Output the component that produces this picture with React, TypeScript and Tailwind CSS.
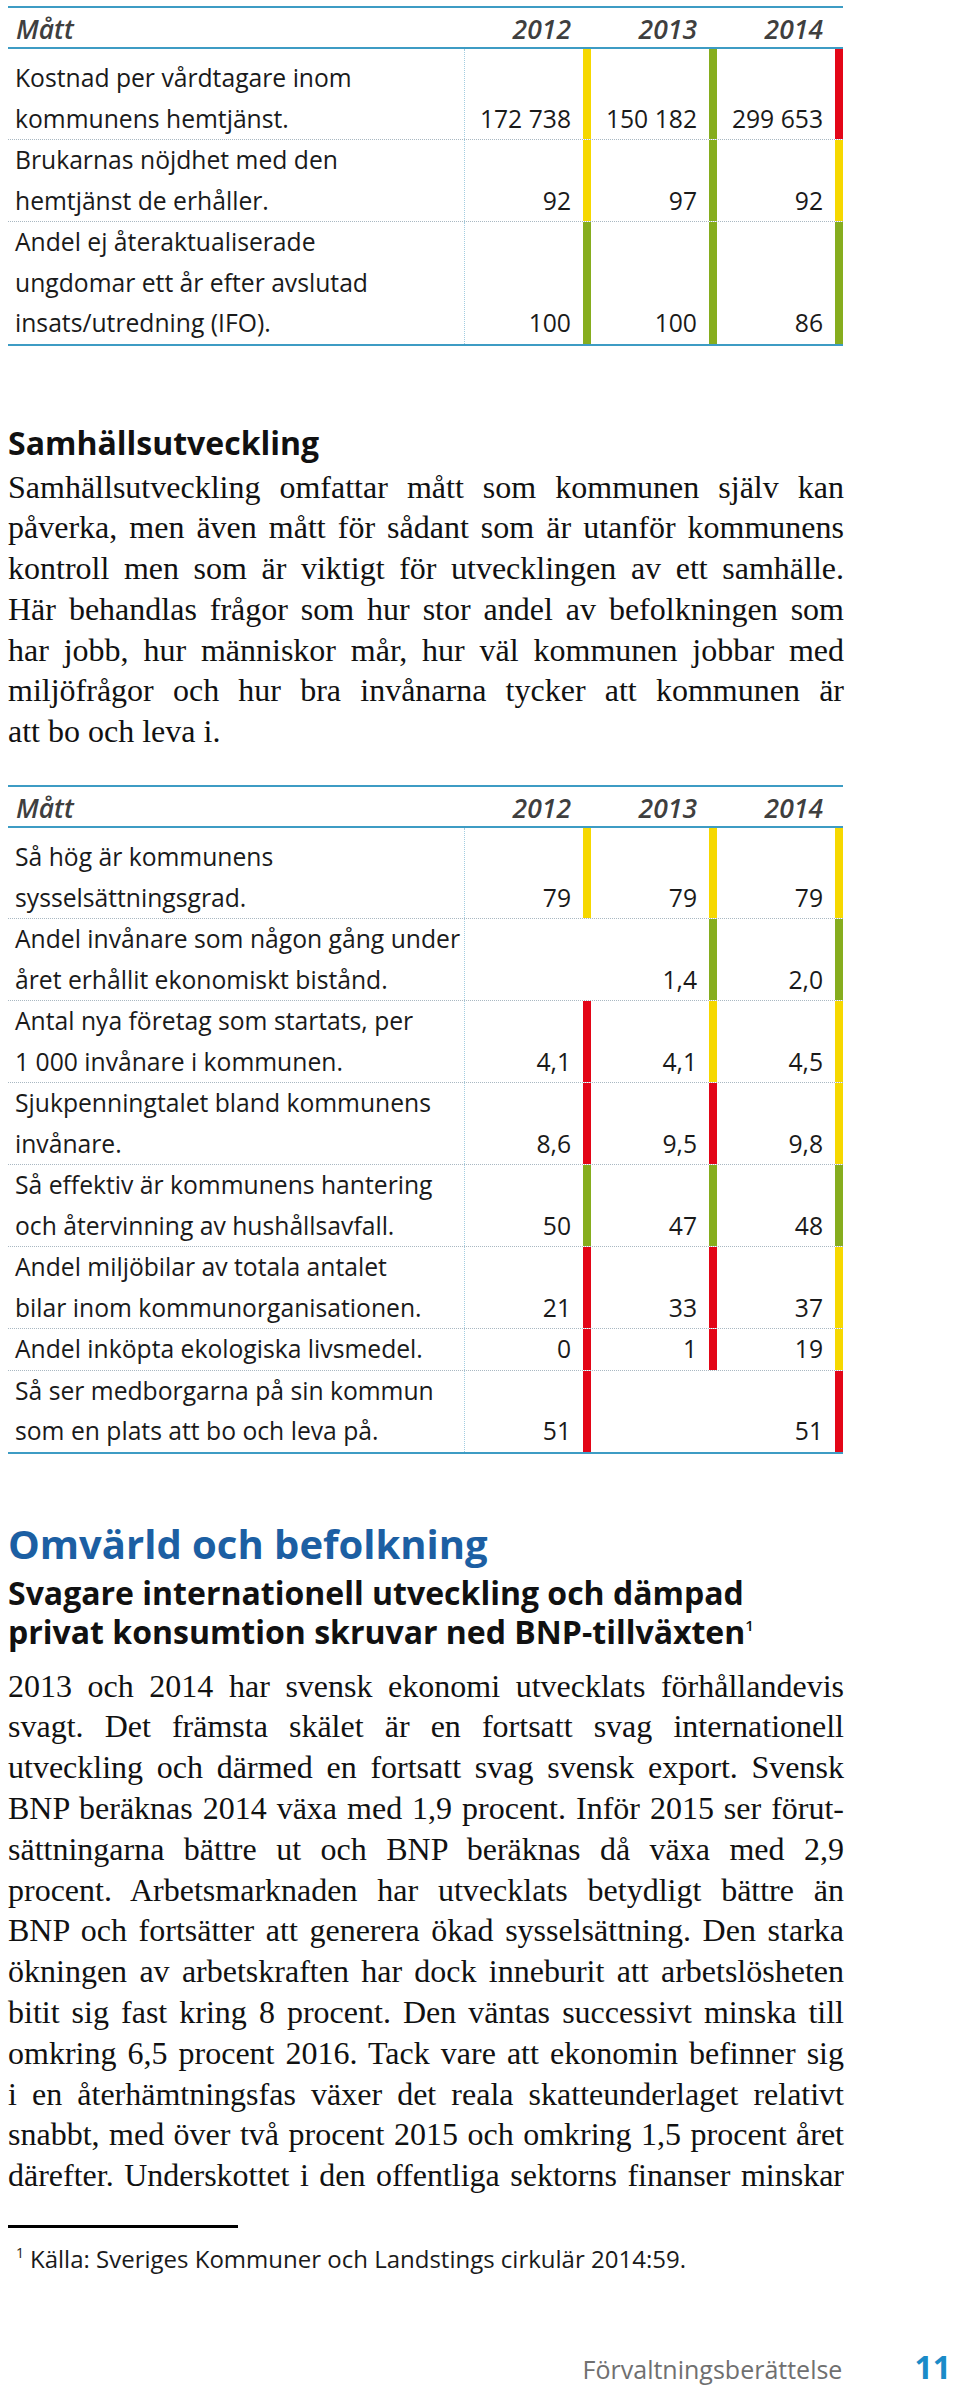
import React from "react";

type Bar = "y" | "g" | "r" | null;

const BAR: Record<"y" | "g" | "r", string> = {
  y: "bg-[#f6d800]",
  g: "bg-[#86ad1e]",
  r: "bg-[#e30617]",
};

type RowData = { label: string[]; vals: string[]; bars: Bar[] };

const table1: RowData[] = [
  {
    label: ["Kostnad per vårdtagare inom", "kommunens hemtjänst."],
    vals: ["172 738", "150 182", "299 653"],
    bars: ["y", "g", "r"],
  },
  {
    label: ["Brukarnas nöjdhet med den", "hemtjänst de erhåller."],
    vals: ["92", "97", "92"],
    bars: ["y", "g", "y"],
  },
  {
    label: ["Andel ej återaktualiserade", "ungdomar ett år efter avslutad", "insats/utredning (IFO)."],
    vals: ["100", "100", "86"],
    bars: ["g", "g", "g"],
  },
];

const table2: RowData[] = [
  { label: ["Så hög är kommunens", "sysselsättningsgrad."], vals: ["79", "79", "79"], bars: ["y", "y", "y"] },
  {
    label: ["Andel invånare som någon gång under", "året erhållit ekonomiskt bistånd."],
    vals: ["", "1,4", "2,0"],
    bars: [null, "g", "g"],
  },
  {
    label: ["Antal nya företag som startats, per", "1 000 invånare i kommunen."],
    vals: ["4,1", "4,1", "4,5"],
    bars: ["r", "y", "y"],
  },
  { label: ["Sjukpenningtalet bland kommunens", "invånare."], vals: ["8,6", "9,5", "9,8"], bars: ["r", "r", "y"] },
  {
    label: ["Så effektiv är kommunens hantering", "och återvinning av hushållsavfall."],
    vals: ["50", "47", "48"],
    bars: ["g", "g", "g"],
  },
  {
    label: ["Andel miljöbilar av totala antalet", "bilar inom kommunorganisationen."],
    vals: ["21", "33", "37"],
    bars: ["r", "r", "y"],
  },
  { label: ["Andel inköpta ekologiska livsmedel."], vals: ["0", "1", "19"], bars: ["r", "r", "y"] },
  {
    label: ["Så ser medborgarna på sin kommun", "som en plats att bo och leva på."],
    vals: ["51", "", "51"],
    bars: ["r", null, "r"],
  },
];

function Row({ row, first, last }: { row: RowData; first: boolean; last: boolean }) {
  return (
    <div
      className={
        "grid grid-cols-[457px_126px_126px_126px] " +
        (last ? "border-b-2 border-solid border-[#3d9cc4]" : "border-b border-dotted border-[#a9b8c2]")
      }
    >
      <div className={"border-r border-dotted border-[#a3cde0] pl-[7px] " + (first ? "pt-[9px]" : "")}>
        {row.label.map((l, i) => (
          <div key={i} className="whitespace-nowrap">
            {l}
          </div>
        ))}
      </div>
      {row.vals.map((v, i) => {
        const b = row.bars[i];
        return (
          <div key={i} className="flex">
            <div className="flex-1 self-end text-right pr-[12px] whitespace-nowrap">{v || "\u00a0"}</div>
            <div className={"w-[8px] " + (b ? BAR[b] : "")} />
          </div>
        );
      })}
    </div>
  );
}

function Table({ rows }: { rows: RowData[] }) {
  return (
    <div className="w-[835px] text-[24.7px] leading-[40.5px] text-[#1a1a1a]">
      <div className="grid grid-cols-[457px_126px_126px_126px] h-[43px] border-y-2 border-[#3d9cc4] pt-[4px] italic font-semibold text-[26.5px] leading-[35px] text-[#3f3f3f]">
        <div className="pl-[8px]">Mått</div>
        <div className="text-right pr-[20px]">2012</div>
        <div className="text-right pr-[20px]">2013</div>
        <div className="text-right pr-[20px]">2014</div>
      </div>
      {rows.map((r, i) => (
        <Row key={i} row={r} first={i === 0} last={i === rows.length - 1} />
      ))}
    </div>
  );
}

function Lines({ lines, justifyLast }: { lines: string[]; justifyLast: boolean }) {
  return (
    <div className="font-['Liberation_Serif',serif] text-[32px] leading-[40.8px] text-[#111]">
      {lines.map((l, i) => {
        const justify = i < lines.length - 1 || justifyLast;
        return (
          <div key={i} className={justify ? "text-justify [text-align-last:justify]" : "text-left"}>
            {l}
          </div>
        );
      })}
    </div>
  );
}

const para1 = [
  "Samhällsutveckling omfattar mått som kommunen själv kan",
  "påverka, men även mått för sådant som är utanför kommunens",
  "kontroll men som är viktigt för utvecklingen av ett samhälle.",
  "Här behandlas frågor som hur stor andel av befolkningen som",
  "har jobb, hur människor mår, hur väl kommunen jobbar med",
  "miljöfrågor och hur bra invånarna tycker att kommunen är",
  "att bo och leva i.",
];

const para2 = [
  "2013 och 2014 har svensk ekonomi utvecklats förhållandevis",
  "svagt. Det främsta skälet är en fortsatt svag internationell",
  "utveckling och därmed en fortsatt svag svensk export. Svensk",
  "BNP beräknas 2014 växa med 1,9 procent. Inför 2015 ser förut-",
  "sättningarna bättre ut och BNP beräknas då växa med 2,9",
  "procent. Arbetsmarknaden har utvecklats betydligt bättre än",
  "BNP och fortsätter att generera ökad sysselsättning. Den starka",
  "ökningen av arbetskraften har dock inneburit att arbetslösheten",
  "bitit sig fast kring 8 procent. Den väntas successivt minska till",
  "omkring 6,5 procent 2016. Tack vare att ekonomin befinner sig",
  "i en återhämtningsfas växer det reala skatteunderlaget relativt",
  "snabbt, med över två procent 2015 och omkring 1,5 procent året",
  "därefter. Underskottet i den offentliga sektorns finanser minskar",
];

export default function App() {
  return (
    <div className="w-[960px] min-h-[2385px] bg-white font-['Open_Sans',sans-serif] text-[#1a1a1a]">
      <div className="w-[844px] pl-[8px] pt-[6px]">
        <Table rows={table1} />

        <h2 className="mt-[77px] mb-[4px] text-[32px] font-bold leading-[40px] text-[#111]">Samhällsutveckling</h2>
        <Lines lines={para1} justifyLast={false} />

        <div className="mt-[33px]">
          <Table rows={table2} />
        </div>

        <h1 className="mt-[66px] text-[40px] font-bold leading-[48px] text-[#1c5fa3]">Omvärld och befolkning</h1>
        <h2 className="mt-[5px] text-[32px] font-bold leading-[39px] text-[#111]">
          <div>Svagare internationell utveckling och dämpad</div>
          <div>
            privat konsumtion skruvar ned BNP-tillväxten
            <span className="relative -top-[13px] text-[15px] font-semibold">1</span>
          </div>
        </h2>
        <div className="mt-[8px]">
          <Lines lines={para2} justifyLast={true} />
        </div>

        <div className="mt-[29px] w-[230px] h-[3px] bg-black" />
        <p className="mt-[16px] text-[24px] leading-[30px] text-[#1a1a1a] whitespace-nowrap">
          <span className="relative -top-[10px] ml-[8px] mr-[6px] text-[14px]">1</span>
          Källa: Sveriges Kommuner och Landstings cirkulär 2014:59.
        </p>
      </div>

      <div className="mt-[74px] flex justify-end items-baseline pr-[9px] leading-[30px]">
        <span className="text-[25px] text-[#707070]">Förvaltningsberättelse</span>
        <span className="ml-[72px] text-[32px] font-bold text-[#1a8bc8]">11</span>
      </div>
    </div>
  );
}
